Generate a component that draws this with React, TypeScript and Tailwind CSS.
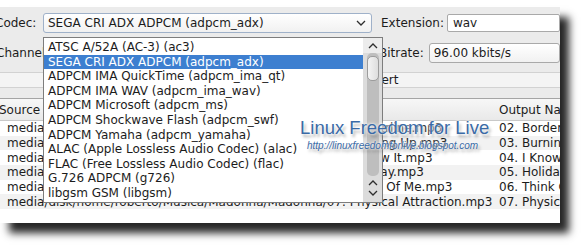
import React from "react";

const codecs = [
  "ATSC A/52A (AC-3) (ac3)",
  "SEGA CRI ADX ADPCM (adpcm_adx)",
  "ADPCM IMA QuickTime (adpcm_ima_qt)",
  "ADPCM IMA WAV (adpcm_ima_wav)",
  "ADPCM Microsoft (adpcm_ms)",
  "ADPCM Shockwave Flash (adpcm_swf)",
  "ADPCM Yamaha (adpcm_yamaha)",
  "ALAC (Apple Lossless Audio Codec) (alac)",
  "FLAC (Free Lossless Audio Codec) (flac)",
  "G.726 ADPCM (g726)",
  "libgsm GSM (libgsm)",
];

const tracks = [
  "02. Borderline.mp3",
  "03. Burning Up.mp3",
  "04. I Know It.mp3",
  "05. Holiday.mp3",
  "06. Think Of Me.mp3",
  "07. Physical Attraction.mp3",
];

function Chevron({ down = true, className = "" }: { down?: boolean; className?: string }) {
  return (
    <svg width="10" height="6" viewBox="0 0 10 6" className={className}>
      <polyline
        points={down ? "1,1 5,5 9,1" : "1,5 5,1 9,5"}
        fill="none"
        stroke="#2e2e2e"
        strokeWidth="1.3"
      />
    </svg>
  );
}

export default function App() {
  return (
    <div className="w-[584px] h-[251px] bg-white overflow-hidden pt-[7px] font-['DejaVu_Sans',sans-serif] text-[12px] text-[#1c1c1c]">
      <div className="relative w-[560px] h-[216px] bg-[#ebebeb] shadow-[9px_10px_8px_rgba(0,0,0,0.85)] flex flex-col">
        {/* Codec / Extension */}
        <div className="mt-[6px] h-[20px] flex items-center">
          <span className="ml-[-5px] w-[48px] shrink-0">Codec:</span>
          <div className="w-[329px] h-[20px] shrink-0 rounded-[3px] border border-[#9fb1c9] bg-gradient-to-b from-white to-[#f1f1f1] flex items-center pl-[4px] pr-[5px]">
            <span className="flex-1">SEGA CRI ADX ADPCM (adpcm_adx)</span>
            <Chevron />
          </div>
          <span className="ml-[9px] shrink-0">Extension:</span>
          <div className="ml-[3px] flex-1 h-[18px] rounded-[2px] border border-[#a9a9a9] bg-white flex items-center pl-[5px]">wav</div>
        </div>

        {/* Channels / Bitrate */}
        <div className="mt-[10px] h-[20px] flex items-center">
          <span className="ml-[-4px] w-[47px] shrink-0 overflow-hidden whitespace-nowrap">Channels:</span>
          <div className="w-[329px] h-[20px] shrink-0 rounded-[3px] border border-[#a9a9a9] bg-white flex items-center pl-[4px]">2</div>
          <span className="ml-[7px] shrink-0">Bitrate:</span>
          <div className="ml-[5px] flex-1 h-[20px] rounded-[3px] border border-[#a9a9a9] bg-gradient-to-b from-white to-[#f1f1f1] flex items-center pl-[4px]">96.00 kbits/s</div>
        </div>

        {/* Convert bar */}
        <div className="mt-[9px] h-[16px] bg-[#f4f4f4] border-y border-[#d2d2d2] flex items-center pl-[351px] leading-none">
          Convert
        </div>

        {/* File table */}
        <div className="mt-[10px] flex-1 bg-white border-t border-[#a5a5a5] overflow-hidden">
          <div className="h-[22px] flex items-center border-b border-[#c9c9c9] bg-gradient-to-b from-[#f7f7f7] to-[#e9e9e9]">
            <span className="ml-[-1px] w-[496px] shrink-0">Source</span>
            <span className="ml-[4px] whitespace-nowrap">Output Name</span>
          </div>
          {tracks.map((t, i) => (
            <div
              key={t}
              className={`h-[14.7px] flex items-center whitespace-nowrap ${i % 2 === 1 ? "bg-[#f2f2f2]" : "bg-white"}`}
            >
              <span className="pl-[7px] w-[495px] shrink-0 overflow-hidden">
                media/disk/home/roberto/Musica/Madonna/Madonna/{t}
              </span>
              <span className="ml-[4px]">{t}</span>
            </div>
          ))}
        </div>

        {/* Open codec dropdown */}
        <div className="absolute left-[43px] top-[30px] w-[340px] h-[166px] bg-white border border-[#7d7d7d] flex">
          <div className="flex-1 pt-[2px]">
            {codecs.map((c, i) => (
              <div
                key={c}
                className={`h-[14.6px] leading-[14.6px] pl-[4px] whitespace-nowrap ${i === 1 ? "bg-[#3d7fd0] text-white" : ""}`}
              >
                {c}
              </div>
            ))}
          </div>
          <div className="w-[19px] bg-[#dcdcdc] flex flex-col items-center">
            <div className="h-[15px] w-full bg-[#ececec] flex items-center justify-center">
              <Chevron down={false} />
            </div>
            <div className="w-[12px] h-[123px] rounded-[5px] bg-[#bebebe] flex flex-col">
              <div className="mt-[3px] h-[25px] rounded-[5px] border border-[#9c9c9c] bg-gradient-to-r from-[#f4f4f4] to-[#dedede]" />
            </div>
            <div className="flex-1 flex flex-col items-center justify-center gap-[4px] pb-[2px]">
              <Chevron down={false} />
              <Chevron />
            </div>
          </div>
        </div>

        {/* Watermark */}
        <div className="absolute left-[300px] top-[112px] font-['Liberation_Sans',sans-serif] text-[#3a6aa6] [text-shadow:0_0_2px_#fff,0_0_4px_#fff,2px_3px_3px_rgba(0,0,0,0.35)]">
          <div className="text-[18.5px] leading-none whitespace-nowrap">Linux Freedom for Live</div>
          <div className="ml-[7px] mt-[3px] text-[10px] italic leading-none whitespace-nowrap">http://linuxfreedomforlive.blogspot.com</div>
        </div>
      </div>
    </div>
  );
}
